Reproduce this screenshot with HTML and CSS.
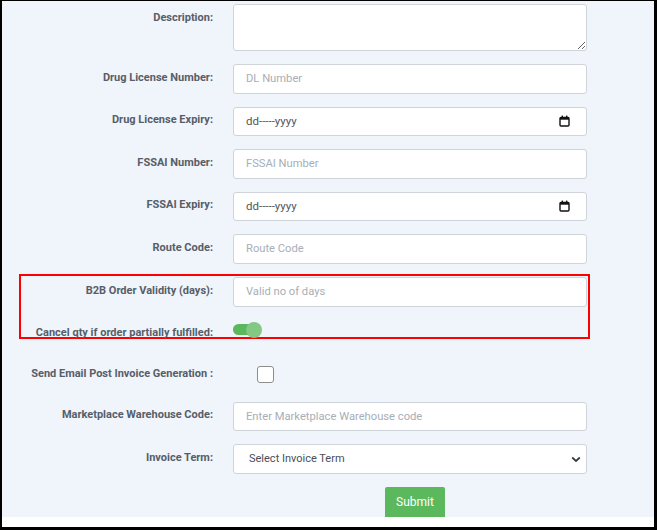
FILE: index.html
```html
<!DOCTYPE html>
<html lang="en">
<head>
    <meta charset="UTF-8">
    <meta name="viewport" content="width=device-width, initial-scale=1.0">
    <title>Retailer Details</title>
    <link rel="stylesheet" href="styles.css">
</head>
<body>

    <div class="frame">
        <form class="panel">

            <div class="row row-area">
                <label class="label">Description:</label>
                <textarea class="field field-area"></textarea>
            </div>

            <div class="row">
                <label class="label">Drug License Number:</label>
                <input class="field" type="text" placeholder="DL Number">
            </div>

            <div class="row">
                <label class="label">Drug License Expiry:</label>
                <div class="field date-field">
                    <span>dd-----yyyy</span>
                    <svg class="cal" width="11" height="12" viewBox="0 0 11 12">
                        <rect x="1" y="2.5" width="9" height="8.5" rx="1" fill="none" stroke="#111" stroke-width="1.4"/>
                        <rect x="1" y="2.5" width="9" height="2.2" fill="#111"/>
                        <rect x="2.6" y="0.6" width="1.4" height="2.4" fill="#111"/>
                        <rect x="7" y="0.6" width="1.4" height="2.4" fill="#111"/>
                    </svg>
                </div>
            </div>

            <div class="row">
                <label class="label">FSSAI Number:</label>
                <input class="field" type="text" placeholder="FSSAI Number">
            </div>

            <div class="row">
                <label class="label">FSSAI Expiry:</label>
                <div class="field date-field">
                    <span>dd-----yyyy</span>
                    <svg class="cal" width="11" height="12" viewBox="0 0 11 12">
                        <rect x="1" y="2.5" width="9" height="8.5" rx="1" fill="none" stroke="#111" stroke-width="1.4"/>
                        <rect x="1" y="2.5" width="9" height="2.2" fill="#111"/>
                        <rect x="2.6" y="0.6" width="1.4" height="2.4" fill="#111"/>
                        <rect x="7" y="0.6" width="1.4" height="2.4" fill="#111"/>
                    </svg>
                </div>
            </div>

            <div class="row">
                <label class="label">Route Code:</label>
                <input class="field" type="text" placeholder="Route Code">
            </div>

            <div class="highlight">
                <div class="row">
                    <label class="label">B2B Order Validity (days):</label>
                    <input class="field" type="text" placeholder="Valid no of days">
                </div>
                <div class="row">
                    <label class="label">Cancel qty if order partially fulfilled:</label>
                    <div class="switch"></div>
                </div>
            </div>

            <div class="row row-check">
                <label class="label">Send Email Post Invoice Generation :</label>
                <input class="check" type="checkbox">
            </div>

            <div class="row">
                <label class="label">Marketplace Warehouse Code:</label>
                <input class="field" type="text" placeholder="Enter Marketplace Warehouse code">
            </div>

            <div class="row">
                <label class="label">Invoice Term:</label>
                <div class="select-wrap">
                    <select class="field select">
                        <option>Select Invoice Term</option>
                    </select>
                    <svg class="chevron" width="10" height="7" viewBox="0 0 10 7">
                        <polyline points="1.2,1.5 5,5 8.8,1.5" fill="none" stroke="#3a3f44" stroke-width="1.8"/>
                    </svg>
                </div>
            </div>

            <div class="row">
                <span></span>
                <button class="btn-submit" type="button">Submit</button>
            </div>

        </form>
    </div>

</body>
</html>
```

FILE: styles.css
```css
* {
  margin: 0;
  padding: 0;
  box-sizing: border-box;
}

body {
    background-color: #000;
    font-family: Roboto, "Liberation Sans", sans-serif;
    height: 530px;
    overflow: hidden;
}

.frame {
    width: 652px;
    height: 526px;
    margin: 1px 0 0 2px;
    background-color: #fff;
}

.panel {
    height: 516px;
    padding-top: 3px;
    background-color: #f0f4fb;
    overflow: hidden;
}

.row {
    display: grid;
    grid-template-columns: 211px 354px;
    column-gap: 20px;
    margin-bottom: 13px;
}

.label {
    text-align: right;
    font-size: 11px;
    font-weight: 700;
    line-height: 14px;
    padding-top: 6.5px;
    color: #575e68;
    white-space: nowrap;
}

.field {
    height: 29.5px;
    width: 100%;
    border: 1px solid #ced4da;
    border-radius: 3px;
    background-color: #fff;
    padding: 0 12px;
    font-family: Roboto, "Liberation Sans", sans-serif;
    font-size: 11.2px;
    color: #495057;
    outline: none;
}

.field::placeholder {
    color: #a8aeb6;
}

.field-area {
    height: 47px;
    resize: vertical;
}

.date-field {
    display: flex;
    align-items: center;
    justify-content: space-between;
    padding-right: 16px;
    font-size: 11.5px;
    color: #50565c;
}

.cal {
    display: block;
}

/* red box around the order settings */
.highlight {
    width: 571px;
    height: 65px;
    margin: -3px 0 0 17px;
    padding-top: 1.5px;
    border: 2px solid #f00;
}

.highlight .row {
    grid-template-columns: 192px 354px;
}

.switch {
    position: relative;
    width: 22px;
    height: 11px;
    margin-top: 4.5px;
    border-radius: 6px;
    background-color: #5cb85c;
}

.switch::after {
    content: "";
    position: absolute;
    left: 13px;
    top: -2.5px;
    width: 16px;
    height: 16px;
    border-radius: 50%;
    background-color: #83c883;
}

.row-check {
    margin-top: 22px;
    margin-bottom: 11.5px;
    height: 29.5px;
}

.check {
    appearance: none;
    width: 17px;
    height: 17px;
    margin: 5px 0 0 24px;
    border: 1px solid #8d8d8d;
    border-radius: 3px;
    background-color: #fff;
}

.select-wrap {
    position: relative;
}

.select {
    appearance: none;
    padding-left: 15px;
    font-size: 11px;
    color: #495057;
}

.chevron {
    position: absolute;
    right: 6px;
    top: 12px;
}

.btn-submit {
    width: 60px;
    height: 34px;
    margin-left: 152px;
    border: none;
    border-radius: 2px;
    background-color: #5cb85c;
    color: #fff;
    font-family: Roboto, "Liberation Sans", sans-serif;
    font-size: 12px;
    padding-bottom: 4px;
}
```
